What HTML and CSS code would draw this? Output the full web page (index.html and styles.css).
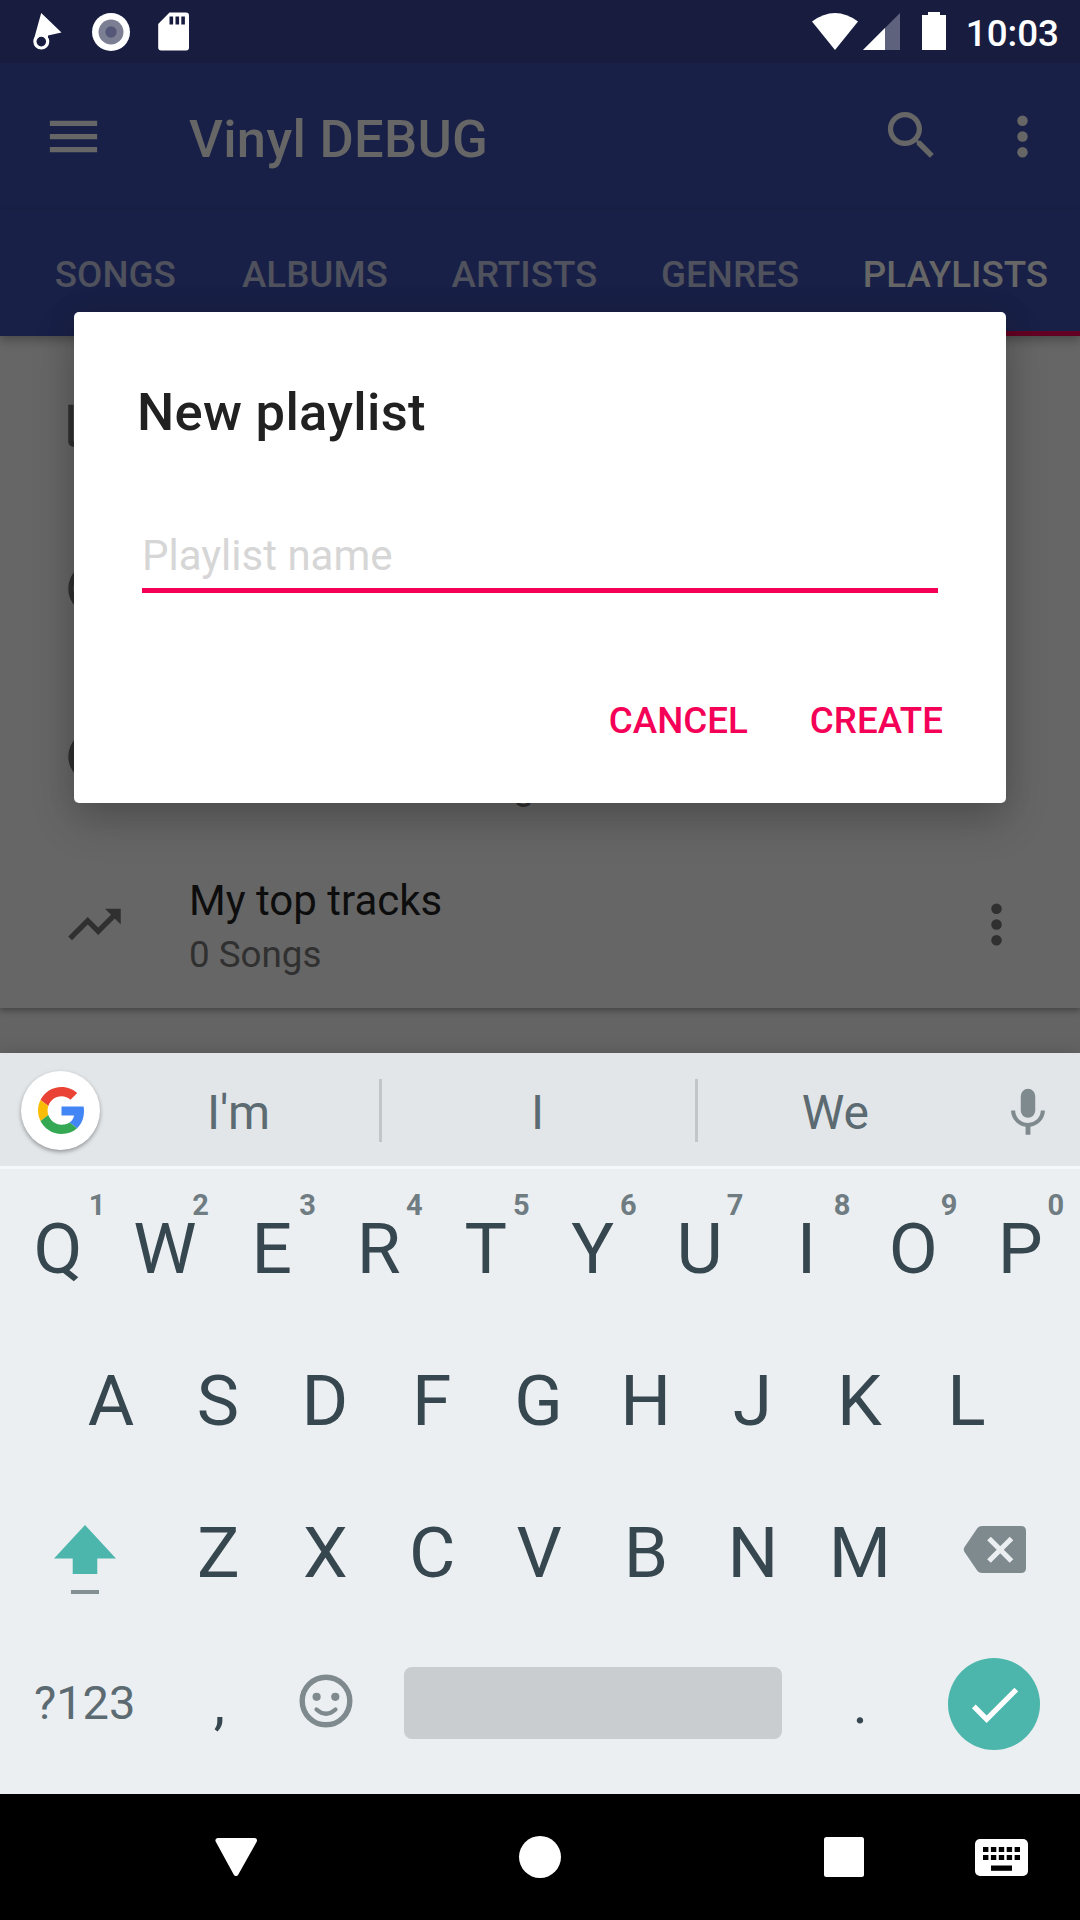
FILE: index.html
```html
<!DOCTYPE html>
<html lang="en">
<head>
<meta charset="utf-8">
<title>Vinyl DEBUG</title>
<link rel="stylesheet" href="styles.css">
</head>
<body>
<div class="screen">
  <div class="status-bar">
    <div class="status-left">
      <svg width="31" height="40" viewBox="32 12 31 40"><path d="M41.2 13L61.5 32.6 48 35.500L48 40L34 39z" fill="#fff"/><circle cx="41.3" cy="41.6" r="6.400" fill="#181d40" stroke="#fff" stroke-width="3.200"/></svg>
      <svg class="disc" width="40" height="40" viewBox="0 0 40 40"><circle cx="20" cy="20" r="19" fill="#fff"/><circle cx="20" cy="20" r="12.5" fill="#7c7e93"/><circle cx="20" cy="20" r="5.7" fill="#545777"/></svg>
      <svg width="31" height="40" viewBox="0 0 31 40"><path d="M11.5 .5H28q3 0 3 3v32q0 3-3 3H3.200q-3 0-3-3V12z" fill="#fff"/><path d="M11.500 4.500h3.600v8h-3.600zM17.500 4.500h3.600v8h-3.600zM23.300 4.500h3.600v8h-3.600z" fill="#181d40"/></svg>
    </div>
    <div class="status-right">
      <svg width="134" height="40" viewBox="812 12 134 40"><path d="M812 21.500Q835 4.500 858 21.500L835 50z" fill="#fff"/><path d="M900 13v37h-37z" fill="#5f627c"/><path d="M885 28v22h-22z" fill="#fff"/><path d="M928 12h12v3h6v35h-24V15h6z" fill="#fff"/></svg>
      <span class="clock">10:03</span>
    </div>
  </div>

  <div class="toolbar">
    <svg class="icon" viewBox="0 0 24 24"><path d="M3 18h18v-2H3v2zm0-5h18v-2H3v2zm0-7v2h18V6H3z"/></svg>
    <h1 class="title">Vinyl DEBUG</h1>
    <svg class="icon search" viewBox="0 0 24 24"><path d="M15.500 14h-.79l-.28-.27C15.410 12.590 16 11.110 16 9.500 16 5.910 13.090 3 9.500 3S3 5.910 3 9.500 5.910 16 9.500 16c1.610 0 3.090-.59 4.230-1.570l.27.28v.79l5 4.990L20.490 19l-4.990-5zm-6 0C7.010 14 5 11.990 5 9.500S7.010 5 9.500 5 14 7.010 14 9.500 11.990 14 9.500 14z"/></svg>
    <svg class="icon" viewBox="0 0 24 24"><circle cx="12" cy="6" r="2"/><circle cx="12" cy="12" r="2"/><circle cx="12" cy="18" r="2"/></svg>
  </div>

  <div class="tabs">
    <div class="tab">SONGS</div>
    <div class="tab">ALBUMS</div>
    <div class="tab">ARTISTS</div>
    <div class="tab">GENRES</div>
    <div class="tab active">PLAYLISTS</div>
  </div>

  <div class="content">
    <div class="list">
      <div class="row"><svg class="icon" viewBox="0 0 24 24"><path d="M4 6H2v14c0 1.100.9 2 2 2h14v-2H4V6zm16-4H8c-1.100 0-2 .9-2 2v12c0 1.100.9 2 2 2h12c1.100 0 2-.9 2-2V4c0-1.100-.9-2-2-2z"/></svg></div>
      <div class="row"><svg class="icon" viewBox="0 0 24 24"><circle cx="12" cy="12" r="9" fill="none" stroke="#303030" stroke-width="2"/></svg></div>
      <div class="row">
        <svg class="icon" viewBox="0 0 24 24"><circle cx="12" cy="12" r="10"/></svg>
        <div class="row-text"><div class="row-title">&nbsp;</div><div class="row-sub period">Past months • 0 Songs</div></div>
      </div>
      <div class="row">
        <svg class="icon" viewBox="0 0 24 24"><path d="M16 6l2.290 2.290-4.880 4.880-4-4L2 16.590 3.410 18l6-6 4 4 6.300-6.290L22 12V6z"/></svg>
        <div class="row-text"><div class="row-title">My top tracks</div><div class="row-sub">0 Songs</div></div>
        <svg class="icon" viewBox="0 0 24 24"><circle cx="12" cy="6" r="2"/><circle cx="12" cy="12" r="2"/><circle cx="12" cy="18" r="2"/></svg>
      </div>
    </div>
  </div>

  <div class="keyboard">
    <div class="suggestions">
      <div class="google"><svg width="47" height="47" viewBox="0 0 48 48"><path fill="#EA4335" d="M24 9.500c3.540 0 6.710 1.220 9.210 3.600l6.850-6.850C35.900 2.380 30.470 0 24 0 14.620 0 6.510 5.380 2.560 13.220l7.980 6.190C12.430 13.720 17.740 9.500 24 9.500z"/><path fill="#4285F4" d="M46.980 24.550c0-1.570-.15-3.090-.38-4.550H24v9.020h12.940c-.58 2.960-2.260 5.480-4.780 7.180l7.730 6c4.510-4.180 7.090-10.360 7.090-17.650z"/><path fill="#FBBC05" d="M10.530 28.590c-.48-1.450-.76-2.990-.76-4.590s.27-3.140.76-4.590l-7.980-6.190C.92 16.460 0 20.120 0 24c0 3.880.92 7.540 2.560 10.780l7.970-6.190z"/><path fill="#34A853" d="M24 48c6.480 0 11.930-2.130 15.890-5.810l-7.730-6c-2.150 1.450-4.920 2.300-8.160 2.300-6.260 0-11.570-4.220-13.470-9.910l-7.980 6.190C6.510 42.620 14.620 48 24 48z"/></svg></div>
      <div class="word">I'm</div>
      <div class="word mid">I</div>
      <div class="word">We</div>
      <svg class="mic" width="58" height="58" viewBox="0 0 24 24"><rect x="9" y="2" width="6" height="12" rx="3"/><path d="M17.300 11c0 3-2.540 5.100-5.300 5.100S6.700 14 6.700 11H5c0 3.410 2.720 6.230 6 6.720V21h2v-3.280c3.280-.48 6-3.300 6-6.720h-1.700z"/></svg>
    </div>
    <div class="keys">
      <div class="key-row">
        <div class="key">Q<span class="hint first">1</span></div><div class="key">W<span class="hint">2</span></div><div class="key">E<span class="hint">3</span></div><div class="key">R<span class="hint">4</span></div><div class="key">T<span class="hint">5</span></div><div class="key">Y<span class="hint">6</span></div><div class="key">U<span class="hint">7</span></div><div class="key">I<span class="hint">8</span></div><div class="key">O<span class="hint">9</span></div><div class="key">P<span class="hint">0</span></div>
      </div>
      <div class="key-row indented">
        <div class="key">A</div><div class="key">S</div><div class="key">D</div><div class="key">F</div><div class="key">G</div><div class="key">H</div><div class="key">J</div><div class="key">K</div><div class="key">L</div>
      </div>
      <div class="key-row">
        <div class="key wide"><svg width="64" height="152" viewBox="0 0 64 152"><path d="M32 49L63 82.500H44.300V98H19.700V82.500H1z" fill="#4db6ac"/><path d="M18 114h28v4H18z" fill="#848f94"/></svg></div>
        <div class="key">Z</div><div class="key">X</div><div class="key">C</div><div class="key">V</div><div class="key">B</div><div class="key">N</div><div class="key">M</div>
        <div class="key wide last"><svg width="64" height="152" viewBox="-1 3 64 152"><path d="M19 53H58q5 0 5 5v37q0 5-5 5H19q-3 0-4.500-2L1.500 79q-1.500-2.500 0-5L14.500 55q1.500-2 4.500-2z" fill="#7f8a8f"/><path d="M26 65.500l22.500 22.500M48.500 65.500L26 88" stroke="#ebeff2" stroke-width="5.200"/></svg></div>
      </div>
      <div class="key-row">
        <div class="key wide symbols">?123</div>
        <div class="key punct comma">,</div>
        <div class="key"><svg class="emoji" width="54" height="54" viewBox="0 0 54 54"><circle cx="27" cy="27" r="23.800" fill="none" stroke="#7f8a8f" stroke-width="5.400"/><circle cx="17.600" cy="22.800" r="4.100" fill="#7f8a8f"/><circle cx="36.300" cy="22.800" r="4.100" fill="#7f8a8f"/><path d="M17.500 35.500q9.500 8.500 19 0" fill="none" stroke="#7f8a8f" stroke-width="4.200" stroke-linecap="round"/></svg></div>
        <div class="key space"><div class="space-bar"></div></div>
        <div class="key punct">.</div>
        <div class="key wide last"><div class="enter"><svg width="63" height="63" viewBox="0 0 24 24"><path d="M9 16.170L4.830 12l-1.420 1.410L9 19 21 7l-1.410-1.410z" fill="#fff"/></svg></div></div>
      </div>
    </div>
  </div>

  <div class="nav">
    <svg width="44" height="42" viewBox="214 1836 44 42"><path d="M218 1840.500h36.500L236 1873.500z" fill="#fff" stroke="#fff" stroke-width="5" stroke-linejoin="round"/></svg>
    <svg width="42" height="42" viewBox="0 0 42 42"><circle cx="21" cy="21" r="21" fill="#fff"/></svg>
    <svg width="40" height="40" viewBox="0 0 40 40"><rect width="40" height="40" rx="2.500" fill="#fff"/></svg>
    <svg class="kbd" width="53" height="37" viewBox="0 0 53 37"><rect width="53" height="37" rx="5" fill="#fff"/><path d="M8 10.500h37M8 18.500h37" stroke="#000" stroke-width="5.200" stroke-dasharray="5.400 2.500"/><path d="M16 26.500h21v5.300H16z"/></svg>
  </div>

  <div class="dialog">
    <h2 class="dialog-title">New playlist</h2>
    <div class="field">Playlist name</div>
    <div class="actions"><span>CANCEL</span><span>CREATE</span></div>
  </div>
</div>
</body>
</html>
```
FILE: styles.css
```css
* { box-sizing: border-box; }
body { margin: 0; font-family: Roboto, "Liberation Sans", sans-serif; }
svg { display: block; flex: none; }
h1, h2 { margin: 0; font-weight: 500; }

.screen {
  position: relative;
  display: flex;
  flex-direction: column;
  width: 1080px;
  height: 1920px;
  overflow: hidden;
  background: #646464;
}

.status-bar {
  display: flex;
  justify-content: space-between;
  height: 63px;
  padding: 12px 21px 0 32px;
  background: #181d40;
}
.status-left { display: flex; }
.disc { margin: -.5px 27.5px 0 27.5px; }
.status-right { display: flex; }
.clock {
  margin-left: 20px;
  line-height: 43px;
  font-size: 36.75px;
  font-weight: 500;
  color: #fff;
}

.icon { width: 63px; height: 63px; }

.toolbar {
  display: flex;
  align-items: center;
  height: 147px;
  padding: 0 26px 0 42px;
  background: #192047;
}
.toolbar .icon { fill: #666; }
.toolbar .search { margin: -2px 48px 0 0; }
.title {
  flex: 1;
  margin-left: 84px;
  padding-top: 4px;
  font-size: 52.5px;
  letter-spacing: .3px;
  color: #666;
}

.tabs {
  position: relative;
  z-index: 1;
  display: flex;
  justify-content: flex-end;
  height: 126px;
  background: #192047;
  box-shadow: 0 4px 10px rgba(0, 0, 0, .3);
}
.tab {
  min-width: 189.5px;
  padding: 0 31.9px;
  line-height: 130px;
  text-align: center;
  font-size: 36.75px;
  font-weight: 500;
  color: #4f515d;
}
.tab.active { color: #666; box-shadow: inset 0 -5px #620023; }

.content { height: 717px; }
.list {
  height: 672px;
  background: #666;
  box-shadow: 0 3px 6px rgba(0, 0, 0, .3);
}
.row {
  display: flex;
  align-items: center;
  height: 168px;
  padding: 0 52px 0 63px;
}
.row .icon { fill: #303030; }
.row-text { flex: 1; margin-left: 63px; padding-top: 8px; }
.row-title { font-size: 42px; line-height: 52px; color: #0d0d0d; }
.row-sub { font-size: 36.75px; line-height: 55px; color: #303030; }
.row-sub.period { letter-spacing: -.35px; }

.keyboard {
  position: relative;
  display: flex;
  flex-direction: column;
  height: 741px;
  background: #ebeff2;
  box-shadow: 0 0 16px rgba(0, 0, 0, .15);
}
.suggestions {
  display: flex;
  align-items: center;
  height: 116px;
  padding: 2px 23px 0 21px;
  background: #e2e6e9;
  border-bottom: 3px solid #f5f7f9;
}
.google {
  display: flex;
  align-items: center;
  justify-content: center;
  width: 79px;
  height: 79px;
  border-radius: 50%;
  background: #fff;
  box-shadow: 0 2px 4px rgba(0, 0, 0, .35);
}
.google svg { margin-left: 2px; }
.word {
  width: 279px;
  height: 63px;
  padding-right: 1px;
  line-height: 68px;
  text-align: center;
  font-size: 48px;
  color: #5c6a71;
}
.word.mid {
  width: 319px;
  margin: 0 -1px 0 1px;
  padding-right: 2px;
  border: solid #c1c6c8;
  border-width: 0 3px;
}
.mic { margin: 5px 0 0 24px; fill: #7f8a8f; }

.keys { padding-top: 3px; }
.key-row { display: flex; height: 152px; padding: 0 4.5px; }
.key-row.indented { padding-left: 57.5px; }
.key {
  position: relative;
  display: flex;
  align-items: center;
  justify-content: center;
  width: 106.93px;
  font-size: 71.3px;
  color: #37474f;
}
.key.wide { width: 160.4px; }
.key.wide.last { flex: 1; }
.hint {
  position: absolute;
  top: 15px;
  right: 9.5px;
  line-height: 36px;
  font-size: 29px;
  font-weight: 700;
  color: #6f7c82;
}
.hint.first { right: 6px; }
.key.symbols { padding-bottom: 4px; font-size: 47px; color: #5c6a71; }
.key.punct { padding-bottom: 1px; font-size: 57px; }
.key.comma { padding-left: 2px; }
.emoji { margin: -6px 0 0 1px; }
.key.space { width: 428.200px; }
.space-bar {
  width: 378px;
  height: 72px;
  margin-top: -2px;
  border-radius: 8px;
  background: #c9cdd0;
}
.enter {
  display: flex;
  align-items: center;
  justify-content: center;
  width: 92px;
  height: 92px;
  margin-right: 1px;
  border-radius: 50%;
  background: #4db6ac;
}

.nav {
  position: relative;
  display: flex;
  align-items: center;
  height: 126px;
  padding-left: 214px;
  background: #000;
}
.nav svg + svg { margin-left: 261px; }
.nav svg + svg + svg { margin-left: 263px; }
.nav .kbd.kbd { margin-left: 111px; }

.dialog {
  position: absolute;
  z-index: 2;
  left: 74px;
  top: 312px;
  width: 932px;
  height: 491px;
  padding: 70px 63px 0;
  border-radius: 5px;
  background: #fff;
  box-shadow: 0 18px 44px rgba(0, 0, 0, .2), 0 0 30px rgba(0, 0, 0, .1);
}
.dialog-title { font-size: 52.5px; line-height: 61px; letter-spacing: .3px; color: #212121; }
.field {
  height: 150px;
  margin: 0 5px;
  padding: 88px 0 0 0;
  line-height: 50px;
  font-size: 42px;
  color: #d6d6d6;
  border-bottom: 5px solid #f50057;
}
.actions {
  display: flex;
  justify-content: flex-end;
  gap: 62px;
  margin-top: 105px;
  line-height: 46px;
  font-size: 36.75px;
  font-weight: 500;
  color: #f50057;
}
```
